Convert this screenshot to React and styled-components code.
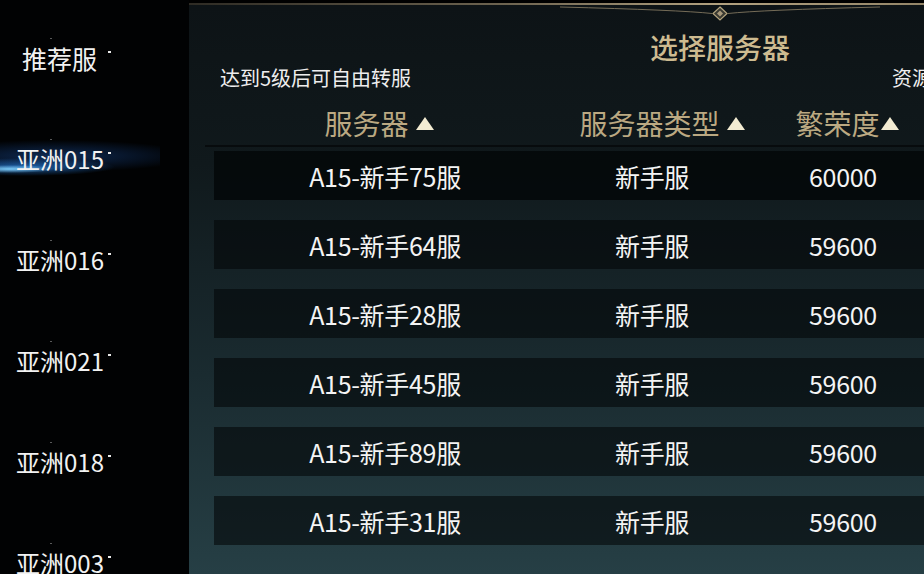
import React from "react";
import styled, { createGlobalStyle } from "styled-components";

const Global = createGlobalStyle`
  html, body { margin: 0; padding: 0; background: #000; }
  body { font-family: "Noto Sans CJK SC", "Noto Sans", sans-serif; }
  * { box-sizing: border-box; }
`;

const Screen = styled.div`
  width: 924px;
  height: 574px;
  overflow: hidden;
  display: flex;
  background: #000;
`;

const Sidebar = styled.nav`
  flex: 0 0 189px;
  display: flex;
  flex-direction: column;
  padding-top: 7px;
  background: #010203;
`;

const SideItem = styled.div`
  position: relative;
  height: 101px;
  flex-shrink: 0;
  display: flex;
  align-items: center;
  padding-left: ${(p) => p.$indent}px;
  color: #f2f2f2;
  font-size: ${(p) => p.$size}px;
  &::before {
    content: "";
    display: ${(p) => (p.$active ? "block" : "none")};
    position: absolute;
    left: 0;
    top: 28px;
    width: 160px;
    height: 44px;
    background:
      radial-gradient(ellipse 45px 4px at 10px 33px, rgba(130, 210, 255, 0.95), rgba(60, 150, 240, 0) 100%),
      radial-gradient(ellipse 90px 9px at 25px 31px, rgba(40, 130, 230, 0.7), rgba(30, 100, 200, 0) 100%),
      radial-gradient(ellipse 140px 16px at 55px 20px, rgba(25, 75, 150, 0.55), rgba(20, 60, 130, 0) 100%);
  }
  &::after {
    content: "";
    position: absolute;
    left: 50px;
    top: 31px;
    width: 2px;
    height: 1px;
    background: rgba(255, 255, 255, 0.35);
  }
`;

const SideLabel = styled.span`
  position: relative;
`;

const Tick = styled.span`
  position: absolute;
  left: 108px;
  top: 44px;
  width: 3px;
  height: 2px;
  background: #e8e8e8;
`;

const Panel = styled.section`
  position: relative;
  flex: 0 0 1062px;
  margin-top: 3px;
  min-height: 571px;
  border-top: 2px solid transparent;
  border-image: linear-gradient(90deg, #2e2b24 0%, #6e6450 30%, #b2a17f 50%, #8a7c60 75%, #5a5242 100%) 1;
  background: linear-gradient(180deg, #0d1316 0%, #10191c 28%, #1a2b30 65%, #263f45 100%);
  padding: 0 25px;
  display: flex;
  flex-direction: column;
`;

const Ornament = styled.svg`
  position: absolute;
  left: 371px;
  top: 0;
`;

const Title = styled.h1`
  margin: 27px 0 0;
  text-align: center;
  font-size: 28px;
  line-height: 30px;
  font-weight: 500;
  color: #cdbb90;
`;

const InfoRow = styled.div`
  display: grid;
  grid-template-columns: 672px auto;
  margin-top: 4px;
  padding-left: 6px;
  font-size: 20px;
  line-height: 24px;
  color: #eeeeee;
  white-space: nowrap;
`;

const HeadRow = styled.div`
  display: grid;
  grid-template-columns: 342px 192px 190px 1fr;
  margin: 17px -9px 0;
  padding: 0 9px 6px;
  border-bottom: 2px solid #070b0d;
`;

const HeadCell = styled.div`
  display: flex;
  align-items: center;
  justify-content: center;
  gap: ${(p) => p.$gap}px;
  transform: translateX(${(p) => p.$shift}px);
  font-size: 28px;
  line-height: 32px;
  color: #bba982;
  white-space: nowrap;
`;

const Rows = styled.div`
  display: flex;
  flex-direction: column;
  gap: 20px;
  margin-top: 4px;
`;

const Row = styled.div`
  display: grid;
  grid-template-columns: 342px 192px 190px 1fr;
  align-items: center;
  height: 49px;
  background: rgba(3, 6, 8, ${(p) => (p.$first ? 0.8 : 0.6)});
  color: #f4f4f4;
  font-size: 25px;
`;

const Cell = styled.div`
  text-align: center;
  letter-spacing: -0.3px;
  white-space: nowrap;
`;

const Caret = () => (
  <svg width="18" height="13" viewBox="0 0 18 13">
    <polygon points="9,0 18,13 0,13" fill="#f3ecd2" />
  </svg>
);

const side = [
  { name: "推荐服", indent: 22, size: 25 },
  { name: "亚洲015", indent: 16, size: 24, active: true },
  { name: "亚洲016", indent: 16, size: 24 },
  { name: "亚洲021", indent: 16, size: 24 },
  { name: "亚洲018", indent: 16, size: 24 },
  { name: "亚洲003", indent: 16, size: 24 },
];

const servers = [
  ["A15-新手75服", "新手服", "60000"],
  ["A15-新手64服", "新手服", "59600"],
  ["A15-新手28服", "新手服", "59600"],
  ["A15-新手45服", "新手服", "59600"],
  ["A15-新手89服", "新手服", "59600"],
  ["A15-新手31服", "新手服", "59600"],
];

export default function App() {
  return (
    <Screen>
      <Global />
      <Sidebar>
        {side.map((s) => (
          <SideItem key={s.name} $indent={s.indent} $size={s.size} $active={s.active}>
            <SideLabel>{s.name}</SideLabel>
            <Tick />
          </SideItem>
        ))}
      </Sidebar>
      <Panel>
        <Ornament width="320" height="20" viewBox="0 0 320 20">
          <path d="M0 2 Q 120 5 152 8.5 M168 8.5 Q 200 5 320 2" stroke="#8f8268" strokeWidth="1" fill="none" opacity="0.8" />
          <polygon points="160,2 167,8.5 160,15 153,8.5" fill="#3a3a32" stroke="#b5a57f" strokeWidth="1.2" />
          <polygon points="160,5.5 163,8.5 160,11.5 157,8.5" fill="#a8987a" />
        </Ornament>
        <Title>选择服务器</Title>
        <InfoRow>
          <span>达到5级后可自由转服</span>
          <span>资源互通</span>
        </InfoRow>
        <HeadRow>
          <HeadCell $gap={7} $shift={-6}>服务器<Caret /></HeadCell>
          <HeadCell $gap={7} $shift={10}>服务器类型<Caret /></HeadCell>
          <HeadCell $gap={1} $shift={4}>繁荣度<Caret /></HeadCell>
          <div />
        </HeadRow>
        <Rows>
          {servers.map((r, i) => (
            <Row key={r[0]} $first={i === 0}>
              <Cell>{r[0]}</Cell>
              <Cell>{r[1]}</Cell>
              <Cell>{r[2]}</Cell>
              <div />
            </Row>
          ))}
        </Rows>
      </Panel>
    </Screen>
  );
}
